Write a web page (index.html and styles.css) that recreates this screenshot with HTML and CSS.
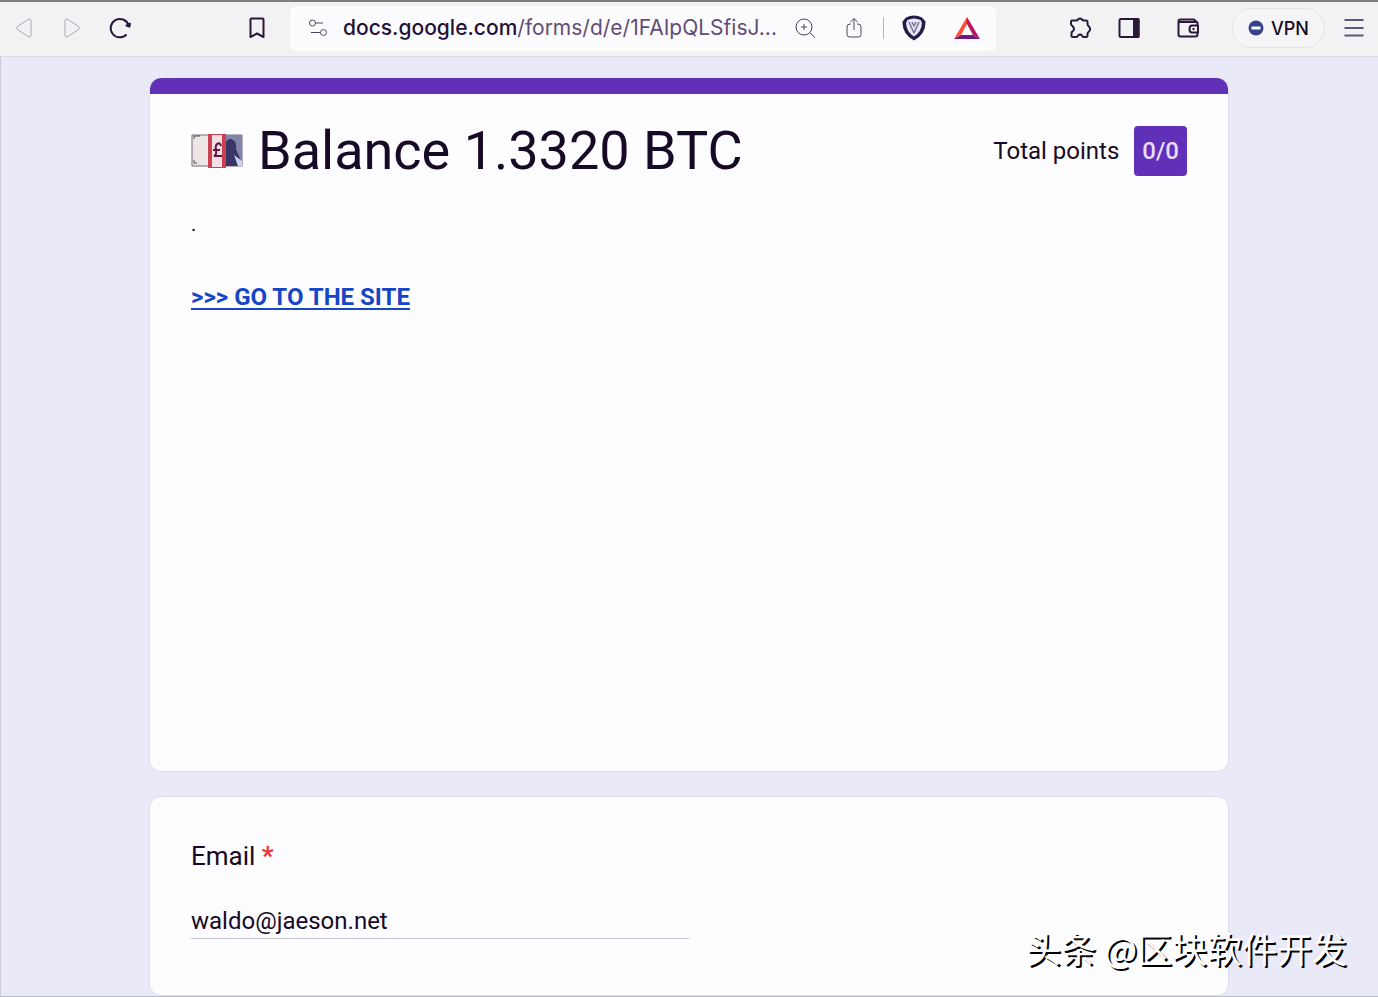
FILE: index.html
```html
<!DOCTYPE html>
<html lang="en">
<head>
<meta charset="utf-8">
<title>Balance 1.3320 BTC</title>
<link rel="stylesheet" href="styles.css">
</head>
<body>
<header class="toolbar">
  <nav class="nav-group">
    <button class="tool faded" aria-label="Back"><svg width="24" height="24" viewBox="0 0 24 24"><path d="M16 3.500Q19 2 19 5v14q0 3-3 1.500L5.500 13.500Q3.500 12 5.500 10.500z"/></svg></button>
    <button class="tool faded" aria-label="Forward"><svg width="24" height="24" viewBox="0 0 24 24"><path d="M8 3.500Q5 2 5 5v14q0 3 3 1.500l10.500-7Q20.500 12 18.500 10.500z"/></svg></button>
    <button class="tool" aria-label="Reload"><svg width="24" height="24" viewBox="0 0 24 24"><path d="M18.500 18.500A9.200 9.200 0 1 1 20.500 9"/><path class="solid" d="M18.500 9.500l3.500-1.800-.6 3z"/></svg></button>
  </nav>
  <button class="tool" aria-label="Bookmark"><svg width="24" height="24" viewBox="0 0 24 24"><path d="M6.500 2.500h11q1 0 1 1v17.500L12 17.500 5.500 21V3.500q0-1 1-1z"/></svg></button>
  <div class="address">
    <button class="tool thin" aria-label="Site settings"><svg width="24" height="24" viewBox="0 0 24 24"><circle cx="6.500" cy="7" r="3"/><path d="M9.500 7H17M5 16.500h9.500"/><circle cx="17.500" cy="16.500" r="3"/></svg></button>
    <div class="url"><b>docs.google.com</b>/forms/d/e/1FAIpQLSfisJ...</div>
    <button class="tool thin" aria-label="Zoom"><svg width="24" height="24" viewBox="0 0 24 24"><circle cx="11" cy="11" r="8"/><path d="M17 17l5 4.500M8 11h6M11 8v6"/></svg></button>
    <button class="tool thin share" aria-label="Share"><svg width="24" height="24" viewBox="0 0 24 24"><path d="M9 8H8q-3 0-3 3v7.500q0 2.500 3 2.500h8q3 0 3-2.500V11q0-3-3-3h-1M12 14V2.500M8.500 6L12 2.500 15.500 6"/></svg></button>
    <span class="divider"></span>
    <button class="tool shield" aria-label="Shields"><svg width="26" height="28" viewBox="0 0 26 28"><path d="M5 3.500Q13-.5 21 3.500l3.500 4Q25 20 13 26.500 1 20 1.500 7.500z" fill="#211d49"/><path d="M6.500 6Q13 3 19.500 6l1.500 3Q20.500 18 13 22.500 5.500 18 5 9z" fill="#e9e7f3"/><path d="M8 8l5 11 5-11M11 8l2 4 2-4" fill="none" stroke="#75709a" stroke-width="1.500"/></svg></button>
    <button class="tool rewards" aria-label="Rewards"><svg width="28" height="26" viewBox="0 0 28 26"><path d="M14 2L1 24l7-4 6-11z" fill="#ff4c35"/><path d="M14 2l13 22-7-4-6-11z" fill="#b5165f"/><path d="M1 24h26l-7-4H8z" fill="#721681"/></svg></button>
  </div>
  <div class="extras">
    <button class="tool fine" aria-label="Extensions"><svg width="24" height="24" viewBox="0 0 24 24"><path d="M3.500 4.500h4.500q1.500 0 2-1 2-2 4 0 .5 1 2 1h2q1.500 0 1.500 1.500v2q0 1.500 1 2 3 3 .5 5.500-1.500 1-1.500 2.500v1.500q0 1.500-1.500 1.500h-2.500q-1 0-1.500-1.500-2-2-4 0-.5 1.500-1.500 1.500H5q-2 0-1.500-2v-2q0-1 1-1.500 3-2.500 0-5.500-1.500-1-1.500-2V6q0-1.500.5-1.500z"/></svg></button>
    <button class="tool fine" aria-label="Sidebar"><svg width="24" height="24" viewBox="0 0 24 24"><rect x="2.500" y="3" width="19" height="18" rx="1.500"/><path class="solid" d="M17 3h4.500v18H17z"/></svg></button>
    <button class="tool fine wallet" aria-label="Wallet"><svg width="24" height="24" viewBox="0 0 24 24"><path d="M21.500 9V7q0-1-1-1L18 3.500H4.500Q2.500 3.500 2.500 5.500v13q0 2 2 2h15q2 0 2-2V17M3 6h17M22 9.500h-6q-2.500 0-2.500 3.500t2.500 3.500h6zM16.500 13h2"/></svg></button>
  </div>
  <button class="vpn"><svg width="16" height="16" viewBox="0 0 16 16"><circle cx="8" cy="8" r="7.500" fill="#36418d"/><path d="M3.500 8h9" stroke="#fff" stroke-width="3"/></svg>VPN</button>
  <button class="tool menu" aria-label="Menu"><svg width="24" height="24" viewBox="0 0 24 24"><path d="M2.500 4h19M2.500 12h19M2.500 19.500h19"/></svg></button>
</header>
<main class="form">
  <section class="card intro">
    <div class="heading">
      <svg class="money" width="52" height="36" viewBox="0 0 52 36"><path d="M1 2h50v31H1z" fill="#ece7e5" stroke="#746b78"/><path d="M34 2h17v31H34z" fill="#8185ab"/><path d="M34 10q4-6 8-3 4 2 3 9l5 12v5H34z" fill="#3b3565"/><path d="M43 22l8 6v5h-4z" fill="#c8d5ed"/><path d="M3 6V3h6M3 27v3h3" fill="none" stroke="#554b55"/><path d="M17 1h18v34H17z" fill="#cc4052"/><path d="M21 2h10v32H21z" fill="#f1dfe5"/><path d="M30 13q-1-4-4-2-2 2-1 6 1 5-2 6h8M22 17h7" fill="none" stroke="#5e163f" stroke-width="2"/></svg>
      <h1>Balance 1.3320 BTC</h1>
      <div class="points">Total points <span class="score">0/0</span></div>
    </div>
    <p class="description">.</p>
    <a class="site-link" href="#">&gt;&gt;&gt; GO TO THE SITE</a>
  </section>
  <section class="card question">
    <label for="email">Email <span class="required">*</span></label>
    <input id="email" type="email" value="waldo@jaeson.net">
  </section>
</main>
<div class="watermark">头条 @区块软件开发</div>
</body>
</html>
```
FILE: styles.css
```css
* { box-sizing: border-box; }
body {
  margin: 0;
  min-height: 100vh;
  position: relative;
  background: #eae9f8;
  box-shadow: inset 1px 0 #c9cad4;
  border-bottom: 1px solid #b9bac8;
  color: #170a26;
  font-family: Roboto, "Liberation Sans", sans-serif;
}
button { border: 0; padding: 0; background: none; color: inherit; font: inherit; }
.toolbar {
  display: flex;
  align-items: center;
  height: 57px;
  padding: 0 12px 2px;
  background: #f2f2f5;
  border-top: 2px solid #7d807f;
  border-bottom: 1px solid #d9dae6;
}
.nav-group { display: flex; gap: 24px; margin-right: 113px; }
.tool { display: flex; flex: none; }
.tool svg { fill: none; stroke: #2a1938; stroke-width: 2; stroke-linejoin: round; }
.tool .solid { fill: #2a1938; }
.faded svg { stroke: #aaa8b1; stroke-width: 1; }
.thin svg { stroke: #51445f; stroke-width: 1; }
.shield svg, .rewards svg { stroke: none; }
.address {
  display: flex;
  align-items: center;
  flex: 1;
  min-width: 0;
  height: 45px;
  margin: 0 72px 0 21px;
  padding: 0 15px 0 16px;
  border-radius: 6px;
  background: #fcfcff;
}
.url {
  flex: 1;
  margin-left: 13px;
  overflow: hidden;
  white-space: nowrap;
  font-family: Inter, "Liberation Sans", sans-serif;
  font-size: 21px;
  line-height: 28px;
  color: #624c75;
}
.url b { font-weight: 500; color: #241036; }
.share { margin-left: 25px; }
.divider { width: 1px; height: 22px; margin: 0 17px; background: #b9b6c3; }
.rewards { margin-left: 26px; }
.extras { display: flex; gap: 25px; }
.wallet { margin-left: 10px; }
.vpn {
  display: flex;
  align-items: center;
  gap: 7px;
  height: 40px;
  margin: 0 17px 0 32px;
  padding: 0 15px;
  border: 1px solid #e3e4e8;
  border-radius: 20px;
  background: #f5f5f8;
  font-family: Inter, "Liberation Sans", sans-serif;
  font-size: 18px;
  font-weight: 500;
}
.menu svg { stroke: #5d5775; stroke-width: 2; }
.form { display: grid; gap: 24px; max-width: 1080px; margin: 0 auto; padding-top: 21px; }
.card {
  padding: 0 41px;
  border: 1px solid #dcdeea;
  border-radius: 12px;
  background: #fdfdff;
}
.intro {
  min-height: 694px;
  border-top: 0;
  background: linear-gradient(#6030b8 16px, #fdfdff 16px) border-box;
  padding-top: 16px;
}
.heading { display: flex; align-items: center; margin-top: 25px; }
h1 { flex: 1; margin: 0 0 0 15px; font-size: 54px; line-height: 64px; font-weight: 400; }
.points { display: flex; align-items: center; gap: 15px; font-size: 24px; line-height: 32px; }
.score {
  padding: 9px 8px;
  border-radius: 4px;
  background: #6030b8;
  color: #eadcff;
  font-weight: 500;
}
.description { margin: 25px 0 41px; font-size: 20px; line-height: 32px; }
.site-link { color: #1546c4; font-size: 24px; line-height: 32px; font-weight: 700; text-underline-offset: 3px; text-decoration-thickness: 2px; }
.question { display: flex; flex-direction: column; align-items: flex-start; min-height: 200px; padding-top: 43px; }
.question label { font-size: 26px; line-height: 32px; }
.required { color: #ee3434; font-weight: 700; }
.question input {
  width: 50%;
  height: 36px;
  margin-top: 31px;
  padding: 0;
  border: 0;
  border-bottom: 1px solid #c0c5cf;
  background: none;
  color: inherit;
  font: inherit;
  font-size: 24px;
}
.watermark {
  position: absolute;
  right: 31px;
  bottom: 24px;
  color: #fff;
  font-family: "Noto Sans CJK SC", sans-serif;
  font-size: 35px;
  line-height: 48px;
  text-shadow: 2px 2px 0 #000;
}
```
